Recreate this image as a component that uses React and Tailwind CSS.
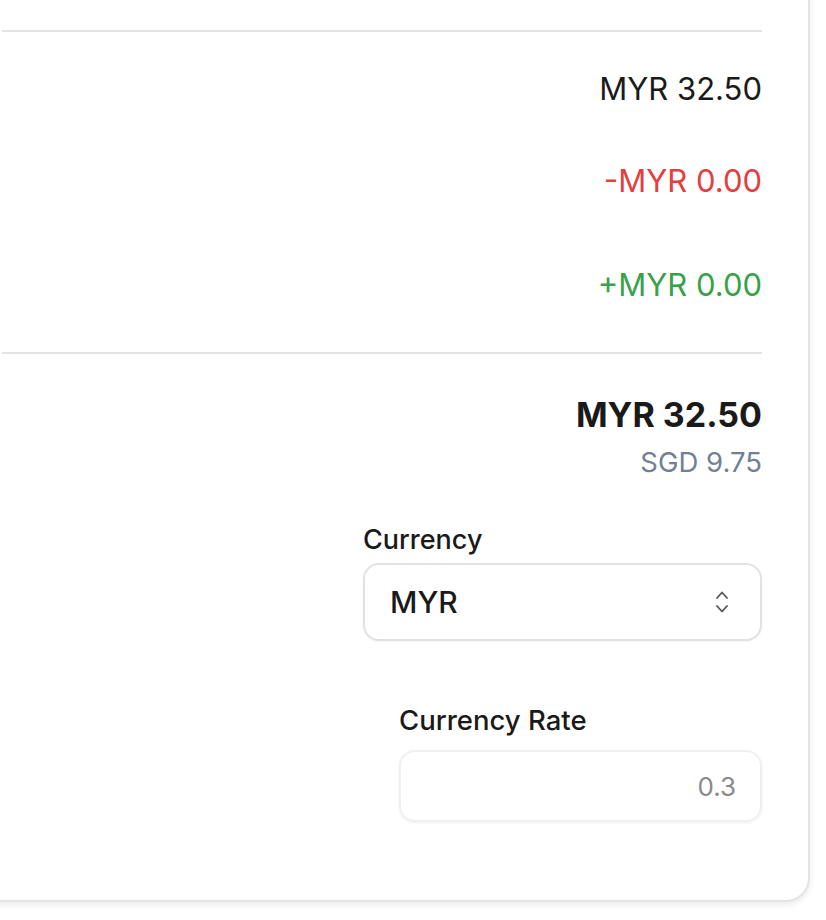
export default function App() {
  return (
    <div className="h-[920px] w-[826px] overflow-hidden bg-white font-['Inter',sans-serif] text-[#1a1a1a]">
      <div className="-ml-[40px] -mt-[40px] h-[942px] w-[850px] rounded-[24px] border-2 border-[#e4e4e4] bg-white shadow-[0_3px_6px_rgba(0,0,0,0.08)]">
        <div className="flex flex-col items-end pl-[40px] pr-[46px] pt-[68px]">
          <div className="h-[2px] w-full bg-[#e4e4e4]" />

          <p className="mt-[39px] text-[31px] leading-[36px]">MYR 32.50</p>
          <p className="mt-[56px] text-[31px] leading-[36px] text-[#e53e3e]">-MYR 0.00</p>
          <p className="mt-[68px] text-[31px] leading-[36px] text-[#38a149]">+MYR 0.00</p>

          <div className="mt-[49px] h-[2px] w-full bg-[#e4e4e4]" />

          <p className="mt-[41px] text-[34px] font-bold leading-[40px]">MYR 32.50</p>
          <p className="mt-[11px] text-[27.5px] leading-[32px] text-[#718096]">SGD 9.75</p>

          <div className="mt-[46px] w-[399px]">
            <label className="block text-[27px] font-medium leading-[32px]">Currency</label>
            <div className="mt-[7px] flex h-[78px] items-center justify-between rounded-[16px] border-2 border-[#e2e2e2] bg-white pl-[25px] pr-[32px] shadow-[0_1px_2px_rgba(0,0,0,0.05)]">
              <span className="text-[30px] font-medium">MYR</span>
              <svg width="12" height="24" viewBox="0 0 12 24" fill="none" stroke="#555" strokeWidth="1.8" strokeLinecap="round" strokeLinejoin="round">
                <path d="M1 8 6 2.5 11 8" />
                <path d="M1 16 6 21.5 11 16" />
              </svg>
            </div>
          </div>

          <div className="mt-[63px] w-[363px]">
            <label className="block text-[27.5px] font-medium leading-[32px]">Currency Rate</label>
            <div className="mt-[14px] flex h-[72px] items-center justify-end rounded-[16px] border-2 border-[#f0f0f0] bg-white pr-[24px] shadow-[0_1px_3px_rgba(0,0,0,0.06)]">
              <span className="text-[26px] text-[#8a8a8a]">0.3</span>
            </div>
          </div>
        </div>
      </div>
    </div>
  )
}
